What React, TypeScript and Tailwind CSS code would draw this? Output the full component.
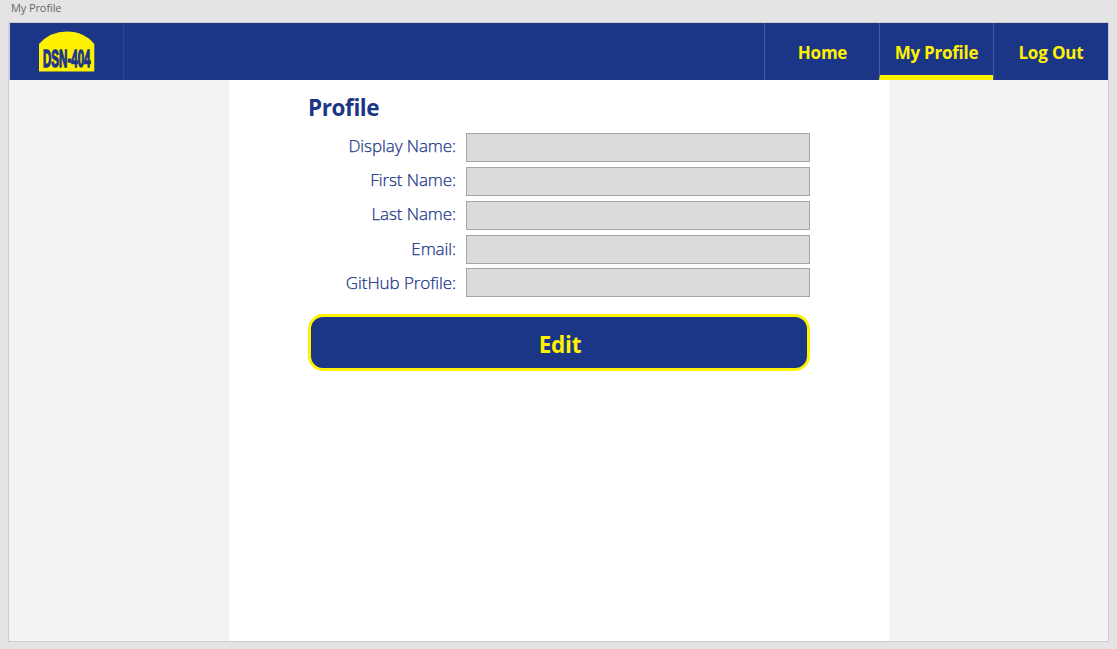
const fields = [
  { label: "Display Name:", row: "h-[34px]", text: "leading-[25px]" },
  { label: "First Name:", row: "h-[34px]", text: "leading-[25px]" },
  { label: "Last Name:", row: "h-[34px]", text: "leading-[25px]" },
  { label: "Email:", row: "h-[33px]", text: "leading-[27px]" },
  { label: "GitHub Profile:", row: "h-[29px]", text: "leading-[29px]" },
];

function Logo() {
  return (
    <svg viewBox="0 0 56 41" className="h-[41px] w-14 overflow-visible" aria-label="DSN-404">
      <path d="M0 13 Q11 0.5 28 0.5 Q45 0.5 55.3 13 V40.5 H0 Z" fill="#fff200" />
      <text
        x="4"
        y="35.7"
        textLength="47.5"
        lengthAdjust="spacingAndGlyphs"
        fontFamily="Liberation Sans, sans-serif"
        fontWeight="700"
        fontSize="23"
        fill="#1b3587"
        stroke="#1b3587"
        strokeWidth="1.4"
      >
        DSN-404
      </text>
    </svg>
  );
}

export default function App() {
  return (
    <div className="flex h-[649px] w-[1117px] flex-col overflow-hidden bg-[#e4e4e4] font-['Open_Sans','Noto_Sans',sans-serif]">
      <div className="h-[22px] pl-[11px] text-[11px] leading-4 tracking-[-0.1px] text-[#696969]">My Profile</div>
      <div className="ml-2 flex h-[620px] w-[1101px] flex-col border border-[#cecece]">
        <header className="flex h-[57px] shrink-0 border-l border-[#cfd3e0] bg-[#1b3587] text-[17px] font-bold text-[#fff200]">
          <div className="flex w-[114px] border-r border-[#2d458f] pt-2 pl-[29px]">
            <Logo />
          </div>
          <nav className="ml-auto flex">
            <a className="flex w-[115px] items-center justify-center border-l border-[#465b9c] pt-0.5 pl-px">
              <span className="tracking-[-0.25px]">Home</span>
            </a>
            <a className="flex w-[114px] items-center justify-center border-b-[5px] border-l border-b-[#fff200] border-l-[#465b9c] pt-[7px]">
              <span className="whitespace-nowrap tracking-[-0.25px]">My Profile</span>
            </a>
            <a className="flex w-[115px] items-center justify-center border-l border-[#465b9c] pt-0.5">
              <span className="tracking-[-0.15px]">Log Out</span>
            </a>
          </nav>
        </header>
        <div className="flex grow bg-[#f3f3f3] pl-[220px]">
          <main className="w-[660px] bg-white pl-[79px] text-[#1b3587]">
            <h1 className="h-[53px] pt-3 text-[22.5px] leading-8 font-bold tracking-[-0.4px]">Profile</h1>
            <form>
              {fields.map((f) => (
                <div key={f.label} className={"flex w-[502px] " + f.row}>
                  <label
                    className={
                      "w-[148px] text-right text-[17px] font-light tracking-[-0.08px] whitespace-nowrap [-webkit-text-stroke:0.25px_#1b3587] " +
                      f.text
                    }
                  >
                    {f.label}
                  </label>
                  <input readOnly className="ml-2.5 h-[29px] w-[344px] border border-[#a6a6a6] bg-[#dbdbdb]" />
                </div>
              ))}
              <button
                type="button"
                className="mt-[17px] h-[57px] w-[502px] rounded-[15px] border-[3px] border-[#fff200] bg-[#1b3587] pt-1 pl-0.5 text-[22.5px] leading-8 font-bold tracking-[-0.2px] text-[#fff200]"
              >
                Edit
              </button>
            </form>
          </main>
        </div>
      </div>
    </div>
  );
}
